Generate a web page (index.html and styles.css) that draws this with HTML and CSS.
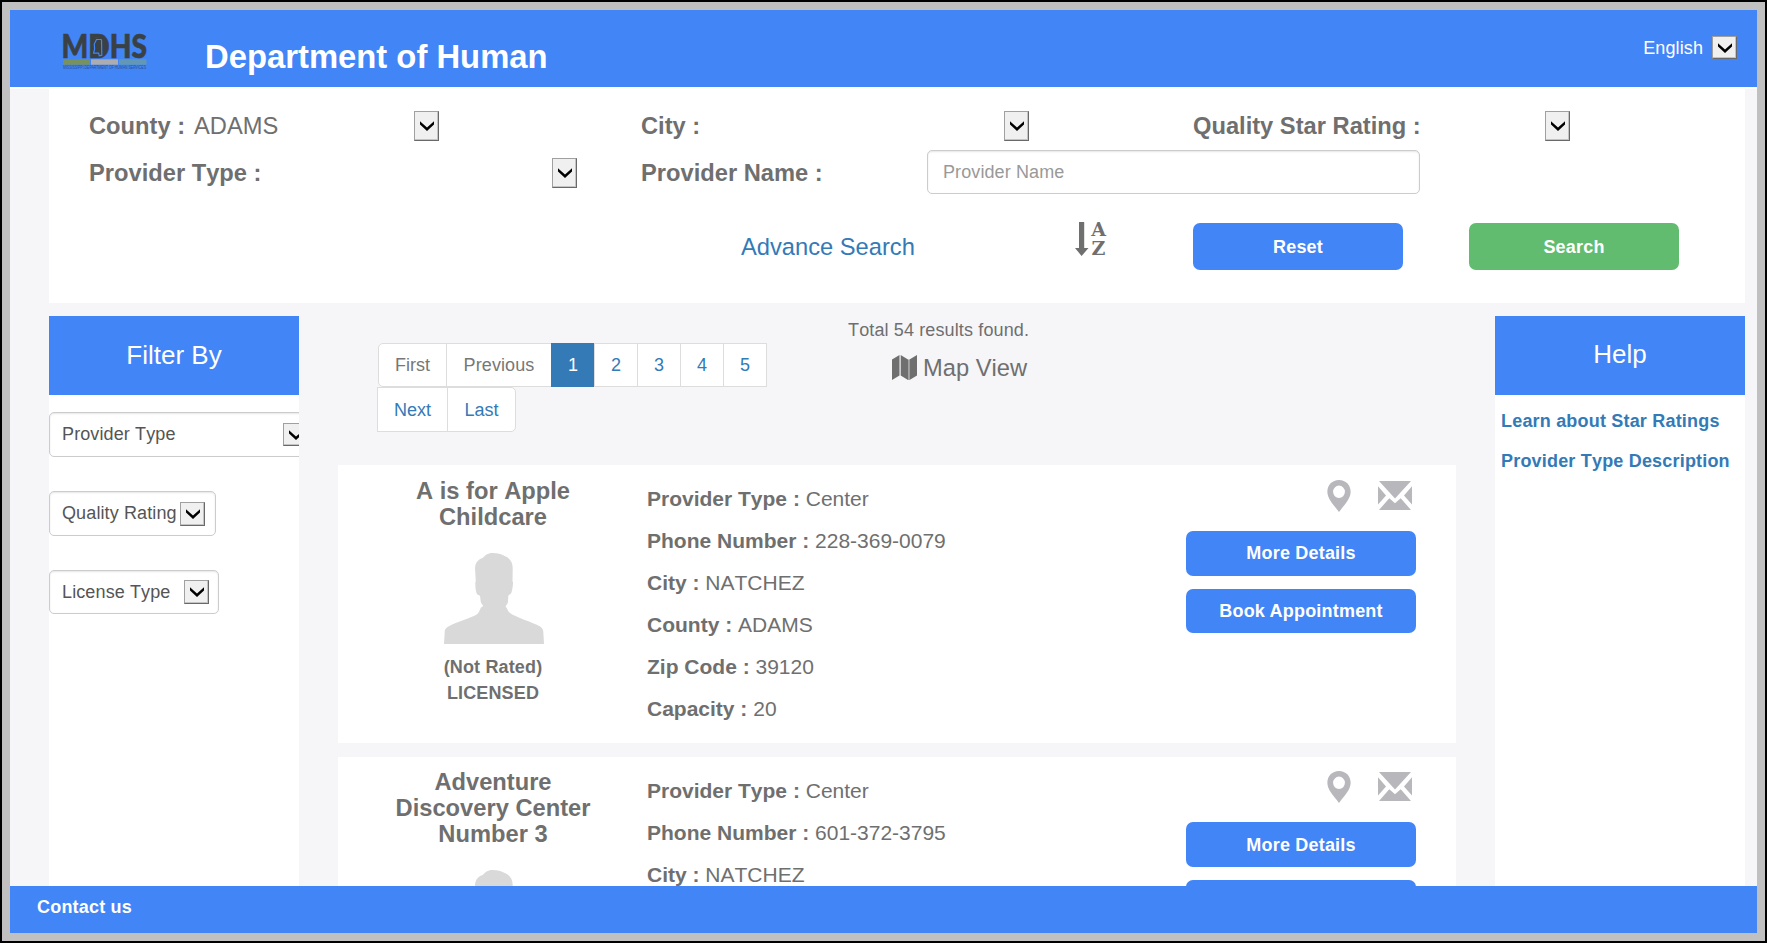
FILE: index.html
```html
<!DOCTYPE html>
<html lang="en">
<head>
<meta charset="utf-8">
<title>Department of Human</title>
<link rel="stylesheet" href="styles.css">
</head>
<body>
<svg class="defs" width="0" height="0">
  <symbol id="chevron" viewBox="0 0 14 10"><path d="M0 0.3 L7 6.6 L14 0.3 V3.6 L7 10 L0 3.6 Z"/></symbol>
  <symbol id="pin" viewBox="0 0 24 33"><path fill-rule="evenodd" d="M12 0C5 0 0 5.2 0 12.2C0 19.5 6 25 12 33C18 25 24 19.5 24 12.2C24 5.2 19 0 12 0ZM12 5.8A6.1 6.4 0 1 1 12 18.6A6.1 6.4 0 1 1 12 5.8Z"/></symbol>
  <symbol id="mail" viewBox="0 0 34 29"><path d="M1 0H33L17 17.5ZM0 5.2L8 14.5L0 23.5ZM34 5.2L26 14.5L34 23.5ZM1 29L11.3 17.2L17 22.3L22.7 17.2L33 29Z"/></symbol>
  <symbol id="person" viewBox="0 0 101 91"><path d="M48.500 0C43.500 0 41 2.500 38.700 5L36 6C33 8 31 11 31 15L31.800 28.700L31.300 29C31.300 33 31.500 37 32.500 40C33.300 42 34.500 42 36 42.700L36.700 48.500C37 50.500 38.500 51.500 39.300 53C37.500 54 36.900 54.500 36.500 55.500C35.500 58 34.500 60.500 32.700 61.500C28 64.500 12 69 5.300 73C2 75 0.800 76 0.700 79L0 91H100L99.300 78.700C99 76 98 74.500 95.300 73C88 69 72 64.500 66 60C63.500 58 63.500 55.500 61.500 53.200C63 51.500 64 50 64 48.500C64.200 46 64 43.500 64.700 42C66 41.500 67.300 40.500 67.700 38.700C68.600 35.500 69 32 69 29L68.500 28.500L68.700 15C68.700 10 66.500 6.500 63.300 4.300C58.500 1.500 54 0 48.500 0Z"/></symbol>
</svg>

<div class="frame">
  <header class="topbar">
    <svg class="logo" width="84" height="36" viewBox="0 0 84 36">
      <text class="logo-name" x="-1.5" y="23" textLength="85.5" lengthAdjust="spacingAndGlyphs">MDHS</text>
      <path fill="#3a4145" d="M31 3H38L43 8V16L39 20H31Z"/>
      <path fill="none" stroke="#4285f6" stroke-width="1.2" d="M38.500 4.500H33.500L31.300 9L31.600 14L30.600 18.200H35.600L36.300 20.800L38.800 20.200L38.500 4.500"/>
      <rect x="0" y="24.3" width="27" height="5.4" fill="#77915f"/>
      <rect x="28" y="24.3" width="27" height="5.4" fill="#adacb0"/>
      <rect x="56" y="24.3" width="27.500" height="5.4" fill="#6298b6"/>
      <text class="logo-sub" x="0" y="34.300" textLength="83" lengthAdjust="spacingAndGlyphs">MISSISSIPPI DEPARTMENT OF HUMAN SERVICES</text>
    </svg>
    <h1 class="title">Department of Human</h1>
    <span class="lang">English</span>
    <span class="arrow arrow-sm"><svg><use href="#chevron"/></svg></span>
  </header>

  <main class="page">
    <section class="search">
      <div class="fields">
        <div class="field"><b class="w-county">County :</b><span class="w-adams">ADAMS</span><span class="arrow"><svg><use href="#chevron"/></svg></span></div>
        <div class="field"><b class="w-city">City :</b><span class="arrow"><svg><use href="#chevron"/></svg></span></div>
        <div class="field"><b class="w-city rating">Quality Star Rating :</b><span class="arrow"><svg><use href="#chevron"/></svg></span></div>
        <div class="field"><b class="w-type">Provider Type :</b><span class="arrow"><svg><use href="#chevron"/></svg></span></div>
        <div class="field name-field"><b class="w-name">Provider Name :</b><input class="name-input" type="text" placeholder="Provider Name"></div>
      </div>
      <div class="commands">
        <a class="advance">Advance Search</a>
        <div class="sort">
          <svg width="14" height="34" viewBox="0 0 14 34"><path fill="#6f6f6f" d="M4 0H9.200V26H13.500L6.600 34L0 26H4Z"/></svg>
          <div class="sort-letters"><span>A</span><span>Z</span></div>
        </div>
        <button class="btn btn-tall">Reset</button>
        <button class="btn btn-tall btn-green">Search</button>
      </div>
    </section>

    <div class="columns">
      <aside class="side">
        <h2 class="side-head">Filter By</h2>
        <div class="select select-wide"><span>Provider Type</span><span class="arrow arrow-sm"><svg><use href="#chevron"/></svg></span></div>
        <div class="select select-quality"><span>Quality Rating</span><span class="arrow arrow-md"><svg><use href="#chevron"/></svg></span></div>
        <div class="select select-license"><span>License Type</span><span class="arrow arrow-md"><svg><use href="#chevron"/></svg></span></div>
      </aside>

      <section class="results">
        <div class="toolbar">
          <div class="pager">
            <div class="pages">
              <span class="pg muted pg-first">First</span><span class="pg muted pg-prev">Previous</span><span class="pg pg-on">1</span><span class="pg">2</span><span class="pg">3</span><span class="pg">4</span><span class="pg">5</span>
            </div>
            <div class="pages pages-next">
              <span class="pg pg-next">Next</span><span class="pg pg-last">Last</span>
            </div>
          </div>
          <div class="summary">
            <p class="total">Total 54 results found.</p>
            <p class="mapview"><svg width="25" height="25" viewBox="0 0 25 25"><path fill="#6f6f6f" d="M0 4.500L7.500 0V20.500L0 25ZM8.700 0L16 4.500V25L8.700 20.500Z"/><path fill="#a3a3a3" d="M16 4.500H17.500V25H16Z"/><path fill="#6f6f6f" d="M17.500 4.500L25 0V20.500L17.500 25Z"/></svg>Map View</p>
          </div>
        </div>

        <article class="card">
          <div class="profile">
            <h3>A is for Apple<br>Childcare</h3>
            <svg class="avatar"><use href="#person"/></svg>
            <p>(Not Rated)<br>LICENSED</p>
          </div>
          <div class="facts">
            <div><b>Provider Type :</b> Center</div>
            <div><b>Phone Number :</b> 228-369-0079</div>
            <div><b>City :</b> NATCHEZ</div>
            <div><b>County :</b> ADAMS</div>
            <div><b>Zip Code :</b> 39120</div>
            <div><b>Capacity :</b> 20</div>
          </div>
          <div class="actions">
            <div class="icons"><svg class="pin"><use href="#pin"/></svg><svg class="mail"><use href="#mail"/></svg></div>
            <button class="btn">More Details</button>
            <button class="btn btn-book">Book Appointment</button>
          </div>
        </article>

        <article class="card">
          <div class="profile">
            <h3>Adventure<br>Discovery Center<br>Number 3</h3>
            <svg class="avatar"><use href="#person"/></svg>
          </div>
          <div class="facts">
            <div><b>Provider Type :</b> Center</div>
            <div><b>Phone Number :</b> 601-372-3795</div>
            <div><b>City :</b> NATCHEZ</div>
          </div>
          <div class="actions">
            <div class="icons"><svg class="pin"><use href="#pin"/></svg><svg class="mail"><use href="#mail"/></svg></div>
            <button class="btn btn-low">More Details</button>
            <button class="btn btn-book"></button>
          </div>
        </article>
      </section>

      <aside class="side help">
        <h2 class="side-head">Help</h2>
        <a>Learn about Star Ratings</a>
        <a>Provider Type Description</a>
      </aside>
    </div>
  </main>

  <footer class="footer">Contact us</footer>
</div>
</body>
</html>
```
FILE: styles.css
```css
* { box-sizing: border-box; }
body {
  margin: 0;
  font-family: "Liberation Sans", Arial, sans-serif;
  font-size: 18px;
  font-kerning: none;
  color: #6f6f6f;
  overflow: hidden;
}
h1, h2, h3, p { margin: 0; }
svg { overflow: visible; }
.defs { position: absolute; }

.frame {
  width: 1767px;
  height: 943px;
  border: 2px solid #000;
  padding: 8px;
  background: #c0c0c0;
  display: flex;
  flex-direction: column;
}

/* Header */
.topbar {
  height: 77px;
  flex: none;
  background: #4285f6;
  color: #fff;
  display: flex;
  align-items: flex-start;
  padding: 0 20px 0 53px;
}
.logo { margin-top: 25px; }
.logo-name {
  font: 900 31.500px Lato, sans-serif;
  fill: #3a4145;
  stroke: #3a4145;
  stroke-width: 0.6px;
}
.logo-sub { font: 4.500px "Liberation Sans", sans-serif; fill: #2f4f86; }
.title {
  margin: 28px auto 0 58px;
  font-size: 32.800px;
  line-height: 38px;
  font-weight: bold;
}
.lang { line-height: 24px; margin: 26px 9px 0 0; letter-spacing: 0.1px; }
.topbar .arrow { margin-top: 26px; }

/* Classic drop-down button */
.arrow {
  flex: none;
  width: 25px;
  height: 30px;
  background: #f0f0f0;
  border: 1px solid #a0a0a0;
  border-right-color: #696969;
  border-bottom-color: #696969;
  box-shadow: inset -1px -1px 0 #c4c4c4;
  display: flex;
  align-items: center;
  justify-content: center;
}
.arrow svg { width: 14px; height: 10px; }
.arrow-sm { height: 23px; }
.arrow-md { height: 24px; }

/* Page area */
.page {
  height: 799px;
  flex: none;
  overflow: hidden;
  background: #f6f6f9;
  border-top: 2px solid #fff;
  padding: 0 12px 0 39px;
}
.search {
  height: 214px;
  background: #fff;
  padding: 13px 0 0 40px;
}
.fields {
  display: grid;
  grid-template-columns: 552px 552px 552px;
  grid-template-rows: 48px 46px;
  font-size: 23.700px;
}
.field { display: flex; align-items: center; }
.field b { flex: none; white-space: nowrap; }
.name-field { grid-column: span 2; }
.w-county { width: 105px; }
.w-adams { width: 220px; }
.w-city { width: 363px; }
.field .rating { width: 352px; }
.w-type { width: 463px; }
.w-name { width: 286px; }
.name-input {
  flex: none;
  width: 493px;
  height: 44px;
  margin-bottom: 2px;
  border: 1px solid #ccc;
  border-radius: 5px;
  padding: 0 15px;
  font: 18px "Liberation Sans", Arial, sans-serif;
  letter-spacing: 0.1px;
  box-shadow: inset 0 1px 2px rgba(0, 0, 0, 0.1);
}
.name-input::placeholder { color: #999; }
.commands {
  margin-top: 27px;
  display: grid;
  grid-template-columns: 334px 118px 276px 210px;
  padding-left: 652px;
}
.advance { font-size: 23.700px; line-height: 48px; color: #337ab7; }
.sort { display: flex; gap: 2px; margin-top: -1px; }
.sort-letters {
  display: flex;
  flex-direction: column;
  width: 15px;
  align-items: center;
  font: bold 19px/19px "DejaVu Serif", serif;
  margin-top: -2px;
}
.btn {
  display: block;
  width: 230px;
  height: 45px;
  border: 0;
  border-radius: 7px;
  padding: 0 0 1px;
  background: #4285f6;
  color: #fff;
  font: bold 18px "Liberation Sans", Arial, sans-serif;
  letter-spacing: 0.2px;
}
.btn-tall { width: 210px; height: 47px; padding: 1px 0 0; }
.btn-green { background: #62bc6f; }

/* Columns */
.columns {
  margin-top: 13px;
  height: 570px;
  display: flex;
  gap: 39px;
}
.side {
  width: 250px;
  flex: none;
  background: #fff;
  overflow: hidden;
}
.side-head {
  height: 79px;
  background: #4285f6;
  color: #fff;
  font-size: 26px;
  font-weight: normal;
  line-height: 78px;
  text-align: center;
}
.select {
  height: 45px;
  border: 1px solid #ccc;
  border-radius: 5px;
  box-shadow: inset 0 1px 2px rgba(0, 0, 0, 0.1);
  padding: 0 9px 0 12px;
  display: flex;
  align-items: center;
  justify-content: space-between;
  color: #555;
  letter-spacing: 0.12px;
}
.select-wide { width: 269px; margin: 17px 0 34px; }
.select-quality { width: 167px; margin-bottom: 34px; padding-right: 10px; }
.select-license { width: 170px; height: 44px; }

.help a {
  display: block;
  padding-left: 6px;
  line-height: 40px;
  color: #337ab7;
  font-weight: bold;
  letter-spacing: 0.19px;
}
.help .side-head { line-height: 76px; margin-bottom: 6px; }

/* Results */
.results { width: 1118px; flex: none; }
.toolbar {
  height: 149px;
  display: grid;
  grid-template-columns: 510px 1fr;
}
.pager { padding: 27px 0 0 39px; }
.pages { display: flex; padding-left: 1px; }
.pages-next { padding-left: 0; }
.pg {
  width: 44px;
  height: 44px;
  margin-right: -1px;
  border: 1px solid #ddd;
  background: #fff;
  color: #337ab7;
  line-height: 42px;
  text-align: center;
}
.muted { color: #777; }
.pg-first { width: 69px; border-radius: 5px 0 0 5px; }
.pg-prev { width: 106px; letter-spacing: 0.1px; }
.pg-on { width: 44px; background: #337ab7; border-color: #337ab7; color: #fff; }
.pages-next .pg { height: 45px; line-height: 45px; }
.pages-next .pg-next { width: 71px; }
.pages-next .pg-last { width: 69px; border-radius: 0 5px 5px 0; }
.total { padding-top: 1px; line-height: 27px; letter-spacing: 0.13px; }
.mapview {
  margin: 6px 0 0 44px;
  display: flex;
  align-items: center;
  gap: 6px;
  font-size: 23.700px;
  line-height: 36px;
}
.mapview svg { margin-bottom: 1px; }

/* Provider cards */
.card {
  height: 278px;
  margin-bottom: 14px;
  background: #fff;
  display: grid;
  grid-template-columns: 309px 539px 230px;
}
.profile {
  padding: 13px 0 0 1px;
  display: flex;
  flex-direction: column;
  align-items: center;
  text-align: center;
  font-weight: bold;
  line-height: 26px;
}
.profile h3 { font-size: 23.700px; }
.profile p { margin-top: 10px; letter-spacing: 0.15px; }
.avatar { width: 101px; height: 91px; margin: 23px 0 0 3px; fill: #d9d9d9; }
.facts { padding-top: 13px; font-size: 21px; line-height: 42px; }
.icons {
  height: 66px;
  padding: 15px 4px 0 0;
  display: flex;
  justify-content: flex-end;
  gap: 27px;
  fill: #b7b7bc;
}
.pin { width: 24px; height: 32px; }
.mail { width: 34px; height: 29px; margin-top: 1px; }
.actions .btn-book { margin-top: 13px; height: 44px; padding: 1px 0 0; }
.actions .btn-low { padding: 1px 0 0; }
.card + .card .actions, .card + .card .profile { margin-top: -1px; }

.footer {
  flex: none;
  height: 47px;
  padding-left: 27px;
  background: #4285f6;
  color: #fff;
  font-weight: bold;
  line-height: 42px;
  letter-spacing: 0.2px;
}
```
